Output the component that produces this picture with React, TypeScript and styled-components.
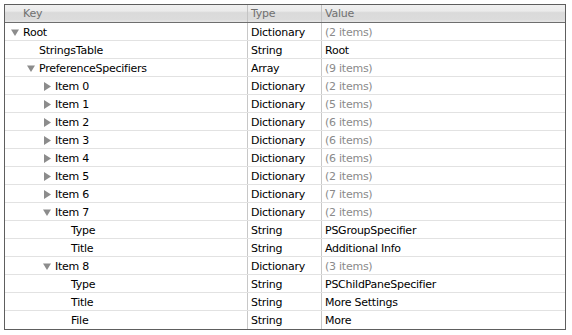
import styled, { createGlobalStyle } from 'styled-components';

type Row = {
  key: string;
  type: string;
  value: string;
  level: number;
  toggle?: 'open' | 'closed';
  muted?: boolean;
};

const rows: Row[] = [
  { key: 'Root', type: 'Dictionary', value: '(2 items)', level: 0, toggle: 'open', muted: true },
  { key: 'StringsTable', type: 'String', value: 'Root', level: 1 },
  { key: 'PreferenceSpecifiers', type: 'Array', value: '(9 items)', level: 1, toggle: 'open', muted: true },
  { key: 'Item 0', type: 'Dictionary', value: '(2 items)', level: 2, toggle: 'closed', muted: true },
  { key: 'Item 1', type: 'Dictionary', value: '(5 items)', level: 2, toggle: 'closed', muted: true },
  { key: 'Item 2', type: 'Dictionary', value: '(6 items)', level: 2, toggle: 'closed', muted: true },
  { key: 'Item 3', type: 'Dictionary', value: '(6 items)', level: 2, toggle: 'closed', muted: true },
  { key: 'Item 4', type: 'Dictionary', value: '(6 items)', level: 2, toggle: 'closed', muted: true },
  { key: 'Item 5', type: 'Dictionary', value: '(2 items)', level: 2, toggle: 'closed', muted: true },
  { key: 'Item 6', type: 'Dictionary', value: '(7 items)', level: 2, toggle: 'closed', muted: true },
  { key: 'Item 7', type: 'Dictionary', value: '(2 items)', level: 2, toggle: 'open', muted: true },
  { key: 'Type', type: 'String', value: 'PSGroupSpecifier', level: 3 },
  { key: 'Title', type: 'String', value: 'Additional Info', level: 3 },
  { key: 'Item 8', type: 'Dictionary', value: '(3 items)', level: 2, toggle: 'open', muted: true },
  { key: 'Type', type: 'String', value: 'PSChildPaneSpecifier', level: 3 },
  { key: 'Title', type: 'String', value: 'More Settings', level: 3 },
  { key: 'File', type: 'String', value: 'More', level: 3 },
];

const Disclosure = ({ open }: { open: boolean }) => (
  <Arrow width="9" height="9" viewBox="0 0 9 9">
    {open ? <polygon points="0,1.5 8,1.5 4,8" fill="#8c8c8c" /> : <polygon points="1,0 8,4.5 1,9" fill="#8c8c8c" />}
  </Arrow>
);

const App = () => (
  <>
    <GlobalStyle />
    <Table>
      <HeaderRow>
        <HeadCell>Key</HeadCell>
        <HeadCell>Type</HeadCell>
        <HeadCell>Value</HeadCell>
      </HeaderRow>
      {rows.map((r, i) => (
        <BodyRow key={i}>
          <KeyCell $level={r.level}>
            {r.toggle && <Disclosure open={r.toggle === 'open'} />}
            {r.key}
          </KeyCell>
          <Cell>{r.type}</Cell>
          <Cell $muted={r.muted}>{r.value}</Cell>
        </BodyRow>
      ))}
    </Table>
  </>
);

const GlobalStyle = createGlobalStyle`
  body {
    margin: 0;
    background: #ffffff;
    font-family: 'DejaVu Sans', 'Liberation Sans', sans-serif;
  }
`;

const Table = styled.div`
  margin: 4px 0 0 4px;
  width: 560px;
  border: 1px solid #5e5e5e;
  background: #ffffff;
`;

const cols = '243px 74px 1fr';

const HeaderRow = styled.div`
  display: grid;
  grid-template-columns: ${cols};
  height: 17px;
  border-bottom: 1px solid #6e6e6e;
  background: linear-gradient(#f0f0f0 0%, #ebebeb 35%, #dadada 45%, #dcdcdc 85%, #e6e6e6 100%);
`;

const HeadCell = styled.div`
  display: flex;
  align-items: center;
  padding-left: 18px;
  font-size: 11px;
  letter-spacing: -0.25px;
  color: #707070;
  border-right: 1px solid #c4c4c4;

  & + & {
    padding-left: 3px;
  }
  &:last-child {
    border-right: none;
  }
`;

const BodyRow = styled.div`
  display: grid;
  grid-template-columns: ${cols};
  height: 17px;
  border-bottom: 1px solid #e2e2e2;

  &:last-child {
    border-bottom: none;
    height: 18px;
  }
`;

const Cell = styled.div<{ $muted?: boolean }>`
  display: flex;
  align-items: center;
  padding: 1px 0 0 3px;
  font-size: 11px;
  letter-spacing: -0.25px;
  color: ${(p) => (p.$muted ? '#8a8a8a' : '#000000')};
  border-right: 1px solid #c8c8c8;
  white-space: nowrap;

  &:last-child {
    border-right: none;
  }
`;

const KeyCell = styled(Cell)<{ $level: number }>`
  padding-left: ${(p) => 18 + p.$level * 16}px;
  position: relative;
`;

const Arrow = styled.svg`
  position: absolute;
  margin-left: -12px;
  margin-top: 0;
`;

export default App;
